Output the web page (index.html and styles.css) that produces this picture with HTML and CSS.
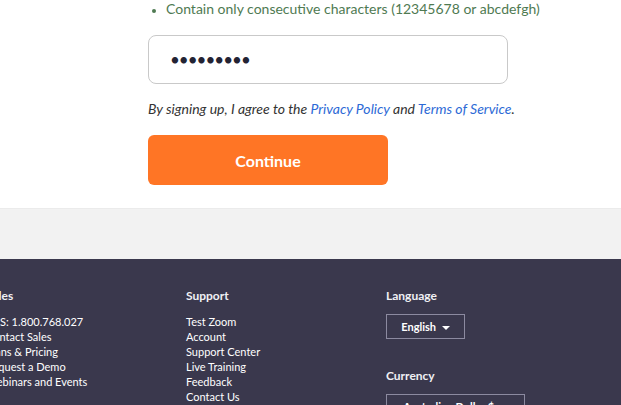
FILE: index.html
```html
<!DOCTYPE html>
<html>
<head>
<meta charset="utf-8">
<link rel="stylesheet" href="styles.css">
</head>
<body>
<main class="signup">
  <ul class="rules">
    <li>Contain only consecutive characters (12345678 or abcdefgh)</li>
  </ul>
  <input class="pwd" type="password" value="123456789">
  <p class="terms">By signing up, I agree to the <a href="#">Privacy Policy</a> and <a href="#">Terms of Service</a>.</p>
  <button class="continue">Continue</button>
</main>
<div class="band"></div>
<footer class="footer">
  <div class="col">
    <h4>Sales</h4>
    <ul>
      <li class="phone">US: 1.800.768.027</li>
      <li>Contact Sales</li>
      <li>Plans &amp; Pricing</li>
      <li>Request a Demo</li>
      <li>Webinars and Events</li>
    </ul>
  </div>
  <div class="col">
    <h4>Support</h4>
    <ul>
      <li>Test Zoom</li>
      <li>Account</li>
      <li>Support Center</li>
      <li>Live Training</li>
      <li>Feedback</li>
      <li>Contact Us</li>
    </ul>
  </div>
  <div class="col">
    <h4>Language</h4>
    <div class="select lang">English <span class="caret"></span></div>
    <h4 class="cur">Currency</h4>
    <div class="select currency">Australian Dollar $ <span class="caret"></span></div>
  </div>
</footer>
</body>
</html>
```
FILE: styles.css
```css
* { box-sizing: border-box; }
html, body { margin: 0; padding: 0; }
body {
  font-family: Lato, "Open Sans", sans-serif;
  background: #fff;
  width: 621px;
  height: 405px;
  overflow: hidden;
}
.signup {
  padding-left: 148px;
  height: 209px;
  border-bottom: 1px solid #ebebeb;
}
.rules {
  margin: 0;
  padding: 0 0 0 18px;
  list-style: disc;
  color: #4f7a52;
  font-size: 14px;
  line-height: 18px;
}
.rules li::marker { font-size: 11px; }
.pwd {
  display: block;
  margin-top: 17px;
  width: 360px;
  height: 49px;
  border: 1px solid #c9c9c9;
  border-radius: 8px;
  padding: 0 21px;
  font-family: Lato, sans-serif;
  font-size: 17px;
  letter-spacing: -1px;
  color: #232333;
  outline: none;
}
.terms {
  margin: 16px 0 0;
  font-size: 14px;
  font-style: italic;
  color: #333;
  line-height: 18px;
}
.terms a { color: #2d6ad6; text-decoration: none; }
.continue {
  display: block;
  margin-top: 17px;
  width: 240px;
  height: 50px;
  border: none;
  border-radius: 6px;
  background: #ff7525;
  color: #fff;
  font-family: Lato, sans-serif;
  font-weight: 700;
  font-size: 16px;
}
.band {
  height: 50px;
  background: #f2f2f2;
}
.footer {
  background: #3a384d;
  height: 146px;
  display: flex;
  margin-left: -14px;
  padding-top: 30px;
  color: #fff;
}
.col { width: 200px; }
.col h4 {
  margin: 0;
  font-size: 12px;
  font-weight: 700;
  line-height: 14px;
  color: #f0f0f4;
}
.col ul {
  list-style: none;
  margin: 11px 0 0;
  padding: 0;
  font-size: 11px;
  line-height: 15px;
  color: #fff;
}
.col li.phone { padding-left: 6px; }
.select {
  margin-top: 11px;
  height: 25px;
  border: 1px solid #8c8aa0;
  font-size: 11px;
  font-weight: 700;
  line-height: 23px;
  text-align: center;
  color: #fff;
}
.lang { width: 79px; }
.currency { width: 139px; }
.caret {
  display: inline-block;
  width: 0; height: 0;
  border-left: 4px solid transparent;
  border-right: 4px solid transparent;
  border-top: 4px solid #fff;
  vertical-align: middle;
  margin-left: 3px;
}
.col h4.cur { margin-top: 30px; }
```
